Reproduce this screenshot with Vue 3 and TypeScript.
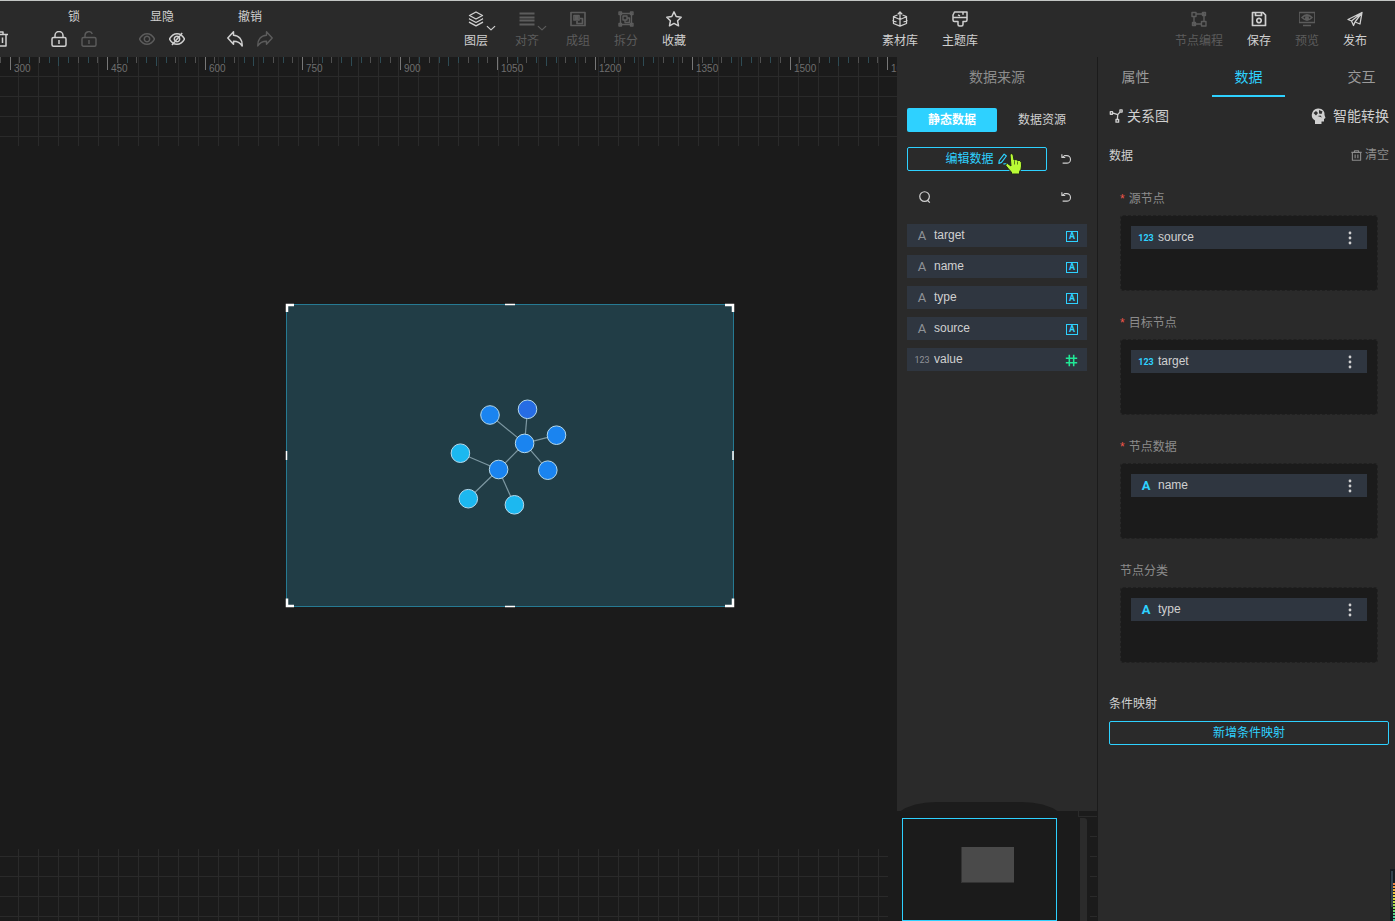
<script setup lang="ts">
import { h, type FunctionalComponent } from 'vue'

interface Glyph {
  d: string
  width: number
}

const glyphs: Record<string, Glyph> = {
  trash: { d: 'M0 3.5H16M5 3V1H11V3M2 3.5V15H14V3.5M6 6.5V12M10.5 6.5V12', width: 1.5 },
  bin: { d: 'M.5 3.5H15.5M5 3V1H11V3M2 3.5V15H14V3.5M6 6.5V12M10 6.5V12', width: 1.6 },
  lock: { d: 'M2.5 6.5H13.5Q15 6.5 15 8V13.7Q15 15.2 13.5 15.2H2.5Q1 15.2 1 13.7V8Q1 6.5 2.5 6.5ZM4 6.5V4.5A4 4 0 0 1 12 4.5V6.5M8 9V13', width: 1.5 },
  unlock: { d: 'M2.5 6.5H13.5Q15 6.5 15 8V13.7Q15 15.2 13.5 15.2H2.5Q1 15.2 1 13.7V8Q1 6.5 2.5 6.5ZM4 6.5V4.5A3.8 3.8 0 0 1 11.3 3M8 9V13', width: 1.4 },
  eye: { d: 'M.5 8Q3.5 2.8 8 2.8T15.5 8Q12.5 13.2 8 13.2T.5 8ZM10.7 8A2.7 2.7 0 1 1 5.3 8A2.7 2.7 0 1 1 10.7 8Z', width: 1.5 },
  eyeOff: { d: 'M.5 8Q3.5 2.8 8 2.8T15.5 8Q12.5 13.2 8 13.2T.5 8ZM10.7 8A2.7 2.7 0 1 1 5.3 8A2.7 2.7 0 1 1 10.7 8ZM13.2 2L3 14', width: 1.5 },
  undo: { d: 'M.8 7L6.5 .8V4.3C12 4.5 15.5 8.5 15.2 15C13 11.5 10.5 10.3 6.5 10.3V13.2Z', width: 1.5 },
  redo: { d: 'M15.2 7L9.5 .8V4.3C4 4.5 .5 8.5 .8 15C3 11.5 5.5 10.3 9.5 10.3V13.2Z', width: 1.4 },
  layers: { d: 'M8 1L14.5 4.5L8 8L1.5 4.5ZM2 7.5L1.5 8L8 11.5L14.5 8L14 7.5M2 11L1.5 11.3L8 14.8L14.5 11.3L14 11', width: 1.4 },
  align: { d: 'M.5 2.5H15.5M.5 6.5H15.5M.5 9.5H15.5M.5 13.5H15.5', width: 2 },
  group: { d: 'M1 1.5H15V14.5H1ZM4 4.5H9V9H4ZM5 6H8M5 7.5H8M7 10V12.5H12.5V7.5H10', width: 1.7 },
  split: { d: 'M2.5 2.5H13.5V13.5H2.5ZM1 1H3.5V3.5H1ZM12.5 1H15V3.5H12.5ZM1 12.5H3.5V15H1ZM12.5 12.5H15V15H12.5ZM5 5H9V9H5ZM7 9V11.5H11.5V7H9', width: 1.4 },
  star: { d: 'M8 .9L10.2 5.5L15.2 6.2L11.6 9.8L12.5 14.8L8 12.4L3.5 14.8L4.4 9.8L.8 6.2L5.8 5.5Z', width: 1.5 },
  box: { d: 'M5.5 4L1.5 5.5V12.5L8 15.2L14.5 12.5V5.5L10.5 4M1 5.5L8 8.5L15 5.5M8 15V1M5.8 3.2L8 1L10.2 3.2M.5 9.5L4.5 11M15.5 9.5L11.5 11', width: 1.3 },
  brush: { d: 'M2.5 1H15V9Q15 10.5 13.5 10.5H11V13.5Q11 15 9.5 15H7.5Q6 15 6 13.5V10.5H2.5Q1 10.5 1 9V4ZM1 6.5H15M6 3.8L8 4.8M11 1V3.8', width: 1.5 },
  flow: { d: 'M1 1.5H5V5.5H1ZM10.5 10.5H15V15H10.5ZM5.5 3H13V10.5M3 6V13H10M11.5 1.5H14.5V4.5H11.5ZM1.5 11.5H4.5V14.5H1.5Z', width: 1.4 },
  save: { d: 'M1.5 1.5H12L14.5 4V14.5H1.5ZM4.5 1.5V4.5H10.5V1.5M10.2 9.5A2.2 2.2 0 1 1 5.8 9.5A2.2 2.2 0 1 1 10.2 9.5Z', width: 1.7 },
  preview: { d: 'M0 1.5H16V11.5H0ZM4 14.5H12M3 6.5Q8 1.5 13 6.5Q8 11.5 3 6.5ZM7 6H9V7.5H7Z', width: 1.7 },
  send: { d: 'M15 1.5L1 8.5L4.5 10L15 1.5L13 13L8 11L6.5 14.5L4.5 10M8 11L15 1.5', width: 1.3 },
  reload: { d: 'M2.5 1.5V6H7M3.500 5.5L6 3.5H9A5 5 0 0 1 9 13.500H3.5', width: 1.5 },
  search: { d: 'M13 7.5A5.5 5.5 0 1 1 2 7.5A5.5 5.5 0 1 1 13 7.5ZM11 12L13.5 14.5', width: 1.4 },
  edit: { d: 'M3 10L9.5 1.5L12.5 4L6 12.5L2.5 14ZM8.5 14.5H14.5', width: 1.6 },
  relation: { d: 'M4 4.5L10 6.5L13 3M10 6.5L9.5 12M1.5 3H4V6H1.5ZM12.5 1H15V3.5H12.5ZM8 12H11V15H8Z', width: 1.5 },
  hash: { d: 'M5.3 1V15M10.7 1V15M1 5.2H15M1 10.8H15', width: 1.9 },
  caret: { d: 'M1.5 5L8 11L14.5 5', width: 2 },
}

const Icon: FunctionalComponent<{ name: string; size?: number }> = (props) => {
  const glyph = glyphs[props.name]
  const size = props.size ?? 16
  return h('svg', { width: size, height: size, viewBox: '0 0 16 16', 'aria-hidden': 'true' }, [
    h('path', {
      d: glyph.d,
      fill: 'none',
      stroke: 'currentColor',
      'stroke-width': glyph.width,
      'stroke-linejoin': 'round',
    }),
  ])
}
Icon.props = ['name', 'size']

interface Tool {
  icon: string
  label: string
  off?: boolean
  menu?: boolean
  wide?: boolean
}

const toolPairs: { label: string; tools: Tool[] }[] = [
  { label: '锁', tools: [{ icon: 'lock', label: '锁定' }, { icon: 'unlock', label: '解锁', off: true }] },
  { label: '显隐', tools: [{ icon: 'eye', label: '显示', off: true }, { icon: 'eyeOff', label: '隐藏' }] },
  { label: '撤销', tools: [{ icon: 'undo', label: '撤销' }, { icon: 'redo', label: '重做', off: true }] },
]

const toolSets: { key: string; tools: Tool[] }[] = [
  {
    key: 'arrange',
    tools: [
      { icon: 'layers', label: '图层', menu: true },
      { icon: 'align', label: '对齐', off: true, menu: true },
      { icon: 'group', label: '成组', off: true },
      { icon: 'split', label: '拆分', off: true },
      { icon: 'star', label: '收藏' },
    ],
  },
  {
    key: 'library',
    tools: [
      { icon: 'box', label: '素材库', wide: true },
      { icon: 'brush', label: '主题库', wide: true },
    ],
  },
  {
    key: 'publish',
    tools: [
      { icon: 'flow', label: '节点编程', off: true, wide: true },
      { icon: 'save', label: '保存' },
      { icon: 'preview', label: '预览', off: true },
      { icon: 'send', label: '发布' },
    ],
  },
]

const ticks = Array.from({ length: 92 }, (_, i) => {
  const step = i - 1
  const major = step % 10 === 0
  const middle = step % 10 === 5
  return {
    x: Math.floor(10 + step * 9.75),
    length: major ? 13 : middle ? 9 : 6,
    kind: major ? 'major' : middle || step % 2 === 0 ? 'cool' : 'minor',
    label: major ? String(300 + step * 15) : '',
  }
})

const nodes = [
  { x: 205, y: 112, color: '#1a84f0' },
  { x: 242.5, y: 106.3, color: '#266ce4' },
  { x: 239.6, y: 140.4, color: '#1a84f0' },
  { x: 271.5, y: 132.2, color: '#1a84f0' },
  { x: 262.8, y: 167.2, color: '#1a84f0' },
  { x: 213.6, y: 166.5, color: '#1a84f0' },
  { x: 175.4, y: 150.2, color: '#1cb8f0' },
  { x: 183.3, y: 195.7, color: '#1cb8f0' },
  { x: 229.4, y: 201.8, color: '#1cb8f0' },
]
const edges = [[0, 2], [1, 2], [3, 2], [4, 2], [5, 2], [6, 5], [7, 5], [8, 5]]

const columns = [
  { name: 'target', numeric: false },
  { name: 'name', numeric: false },
  { name: 'type', numeric: false },
  { name: 'source', numeric: false },
  { name: 'value', numeric: true },
]

const fields = [
  { label: '源节点', required: true, value: 'source', numeric: true },
  { label: '目标节点', required: true, value: 'target', numeric: true },
  { label: '节点数据', required: true, value: 'name', numeric: false },
  { label: '节点分类', required: false, value: 'type', numeric: false },
]

const tabs = ['属性', '数据', '交互']
const meter = ['#f08040', '#f09a3c', '#efb13c', '#edc43c', '#e4d23e', '#d3da40', '#bcdc46', '#a3dc50', '#86da5e', '#6ad872', '#54d688', '#48d49c', '#42d2ac']
</script>

<template>
  <div class="editor">
    <header class="toolbar">
      <div class="set pairs">
        <button class="tool-icon first" type="button" aria-label="删除"><Icon name="trash" /></button>
        <div v-for="pair in toolPairs" :key="pair.label" class="pair">
          <span class="pair-label">{{ pair.label }}</span>
          <div class="pair-tools">
            <button v-for="tool in pair.tools" :key="tool.icon" class="tool-icon" :class="{ off: tool.off }" type="button" :aria-label="tool.label">
              <Icon :name="tool.icon" />
            </button>
          </div>
        </div>
      </div>
      <div v-for="set in toolSets" :key="set.key" class="set" :class="set.key">
        <button v-for="tool in set.tools" :key="tool.label" class="tool" :class="{ off: tool.off, wide: tool.wide, menu: tool.menu }" type="button">
          <Icon :name="tool.icon" />
          <span>{{ tool.label }}</span>
          <Icon v-if="tool.menu" class="caret" name="caret" :size="10" />
        </button>
      </div>
    </header>

    <div class="workspace">
      <main class="canvas">
        <div class="grid grid-top">
          <svg class="ruler" width="100%" height="20" aria-hidden="true">
            <g v-for="tick in ticks" :key="tick.x">
              <rect :class="tick.kind" :x="tick.x" y="0" width="1" :height="tick.length" />
              <text v-if="tick.label" :x="tick.x + 4" y="15">{{ tick.label }}</text>
            </g>
          </svg>
        </div>
        <svg class="chart" width="450" height="305" viewBox="0 0 450 305" role="img" aria-label="关系图">
          <rect x="1.5" y="1.5" width="447" height="302" fill="#213d46" stroke="#267a93" />
          <g stroke="#7d98a2" stroke-width="1.2">
            <line v-for="edge in edges" :key="edge.join()" :x1="nodes[edge[0]].x" :y1="nodes[edge[0]].y" :x2="nodes[edge[1]].x" :y2="nodes[edge[1]].y" />
          </g>
          <circle v-for="(node, i) in nodes" :key="i" :cx="node.x" :cy="node.y" r="9.3" :fill="node.color" stroke="#b5d9ec" />
          <g fill="none" stroke="#fff" stroke-width="2.5">
            <path d="M2 9V2H9M440 2H448V9M2 295.5V303H9M440 303H448V295.5" />
            <path stroke-width="1.5" d="M220 1.5H230M220 303.5H230M1.5 148V157M448 148V157" />
          </g>
        </svg>
        <div class="grid grid-bottom"></div>
      </main>

      <aside class="side">
        <section class="source">
          <h2>数据来源</h2>
          <div class="switch">
            <button class="active" type="button">静态数据</button>
            <button type="button">数据资源</button>
          </div>
          <div class="edit-row">
            <button class="outline" type="button">编辑数据<Icon name="edit" :size="12" /></button>
            <button class="plain" type="button" aria-label="刷新数据"><Icon name="reload" :size="12" /></button>
            <svg class="pointer" width="18" height="22" viewBox="0 0 18 22" aria-hidden="true">
              <path d="M5 1.5Q6.5 -.2 8 1.5L9 7L11 6.5L13 7.5L15 7.5Q17 9 16.5 13Q16.5 17 14.5 18.5V21H6.5V19Q4 17 .8 12.5Q.5 10.5 2.5 10.5L6 13Z" fill="#b9fb35" stroke="#1f2a18" />
              <path d="M9.5 7.5V11.5M12.5 8.5V11.5" stroke="#5b7d1d" />
            </svg>
          </div>
          <div class="search-row">
            <label for="column-search" aria-label="搜索字段"><Icon name="search" :size="14" /></label>
            <input id="column-search" type="text" />
            <button class="plain" type="button" aria-label="重置搜索"><Icon name="reload" :size="12" /></button>
          </div>
          <ul class="columns">
            <li v-for="column in columns" :key="column.name" class="chip">
              <span class="kind" :class="{ digits: column.numeric }">{{ column.numeric ? '123' : 'A' }}</span>
              <span class="name">{{ column.name }}</span>
              <Icon v-if="column.numeric" class="hash" name="hash" :size="13" />
              <span v-else class="boxed">A</span>
            </li>
          </ul>
        </section>
        <div class="navigator">
          <svg class="bump" width="160" height="10" viewBox="0 0 160 10" aria-hidden="true">
            <path d="M0 10Q14 0 37 0H123Q146 0 160 10Z" fill="#1c1c1c" />
          </svg>
          <div class="minimap"><div class="thumb"></div></div>
          <div class="track"></div>
          <div class="corner"></div>
          <div class="remnant"></div>
        </div>
      </aside>

      <aside class="settings">
        <nav class="tabs">
          <button v-for="tab in tabs" :key="tab" type="button" :class="{ active: tab === '数据' }">{{ tab }}</button>
        </nav>
        <div class="kind-row">
          <span class="chart-kind"><Icon name="relation" :size="14" />关系图</span>
          <button type="button" class="smart">
            <svg width="15" height="17" viewBox="0 0 15 17" aria-hidden="true">
              <path d="M7 .5C11.5 .3 14 3.5 13.5 7L14.5 10L13 11V13.5H10.5V16H4V12.5C1.5 11 .5 9 .8 6.5C1.2 3 3.5 .8 7 .5Z" fill="#d0d0d0" />
              <path d="M2.5 5L5 3L7 5L5 7.5ZM8 2L11.5 3.5L10.5 6L8 5.5ZM6.5 8L9.5 7.5L11 9.5" fill="#333" />
            </svg>
            智能转换
          </button>
        </div>
        <div class="data-row">
          <h3>数据</h3>
          <button type="button"><Icon name="bin" :size="11" />清空</button>
        </div>
        <div class="fields">
          <section v-for="field in fields" :key="field.label">
            <h4><i v-if="field.required">*</i>{{ field.label }}</h4>
            <div class="drop">
              <div class="chip">
                <span class="kind bound" :class="{ digits: field.numeric }">{{ field.numeric ? '123' : 'A' }}</span>
                <span class="name">{{ field.value }}</span>
                <button class="more" type="button" :aria-label="field.label + '选项'">
                  <svg width="4" height="14" viewBox="0 0 4 14" aria-hidden="true">
                    <circle v-for="y in [2, 7, 12]" :key="y" cx="2" :cy="y" r="1.4" fill="currentColor" />
                  </svg>
                </button>
              </div>
            </div>
          </section>
        </div>
        <section class="mapping">
          <h3>条件映射</h3>
          <button class="outline" type="button">新增条件映射</button>
        </section>
        <svg class="meter" width="5" height="52" viewBox="0 0 5 52" aria-hidden="true">
          <rect width="5" height="52" fill="#151b20" />
          <rect x="1" y="2" width="2" height="36" fill="#33424d" />
          <rect v-for="(color, i) in meter" :key="color" x="3" :y="14 + i * 3" width="2" height="2" :fill="color" />
        </svg>
      </aside>
    </div>
  </div>
</template>

<style>
body {
  margin: 0;
  background: #1b1b1b;
}
</style>

<style scoped>
.editor {
  display: flex;
  flex-direction: column;
  height: 100vh;
  overflow: hidden;
  color: #d0d0d0;
  background: #1b1b1b;
  font: 12px/16px "Liberation Sans", "Noto Sans CJK SC", sans-serif;
}
.editor * {
  box-sizing: border-box;
}
svg {
  display: block;
  flex: none;
}
button {
  margin: 0;
  padding: 0;
  border: 0;
  color: inherit;
  background: none;
  font: inherit;
  white-space: nowrap;
}
h2,
h3,
h4,
ul {
  margin: 0;
  padding: 0;
  font-size: 12px;
  font-weight: 400;
}

.toolbar {
  display: flex;
  flex: none;
  justify-content: space-between;
  height: 57px;
  padding-right: 16px;
  overflow: hidden;
  border-top: 1px solid #c3c6c4;
  background: #2a2a2a;
}
.set {
  display: flex;
  align-items: flex-start;
}
.pairs {
  gap: 28px;
  margin-left: -8px;
}
.first {
  width: 16px;
  margin: 27px 8px 0 0;
}
.pair {
  width: 60px;
  padding-top: 8px;
  text-align: center;
}
.pair-label {
  display: block;
}
.pair-tools {
  display: flex;
  margin-top: 3px;
}
.tool-icon {
  display: flex;
  align-items: center;
  justify-content: center;
  height: 22px;
}
.pair-tools .tool-icon {
  width: 30px;
}
.tool {
  position: relative;
  display: flex;
  flex-direction: column;
  align-items: center;
  gap: 6px;
  width: 48px;
  padding-top: 10px;
}
.tool.menu {
  margin-right: 3px;
}
.tool.wide {
  width: 60px;
}
.publish {
  padding-left: 7px;
}
.publish .wide {
  margin-right: 6px;
}
.off {
  color: #5c5c5c;
}
.caret {
  position: absolute;
  top: 22px;
  right: 4px;
}

.workspace {
  display: flex;
  flex: 1;
  min-height: 0;
}
.canvas {
  position: relative;
  display: flex;
  flex: 1;
  flex-direction: column;
  justify-content: space-between;
  min-width: 0;
}
.grid {
  background-image:
    linear-gradient(90deg, #2a2a2a 1px, transparent 1px),
    linear-gradient(#2a2a2a 1px, transparent 1px);
  background-size: 20px 20px;
}
.grid-top {
  height: 89px;
  background-position: 18px 19px;
}
.grid-bottom {
  height: 72px;
  margin-right: 9px;
  background-position: 18px 7px;
}
.ruler {
  overflow: hidden;
  font-size: 10px;
}
.ruler text {
  fill: #6e6e6e;
}
.major {
  fill: #777;
}
.minor {
  fill: #505050;
}
.cool {
  fill: #2e4b54;
}
.chart {
  position: absolute;
  top: 246px;
  left: 285px;
}

.side {
  display: flex;
  flex: none;
  flex-direction: column;
  width: 201px;
  padding-right: 1px;
}
.source {
  flex: 1;
  padding: 8px 10px 0;
  background: #2a2a2a;
}
.source h2 {
  color: #8c8c8c;
  font-size: 14px;
  line-height: 24px;
  text-align: center;
}
.switch {
  display: grid;
  grid-template-columns: 1fr 1fr;
  margin-top: 19px;
}
.switch button {
  height: 24px;
  border-radius: 2px;
}
.switch .active {
  color: #fff;
  background: #2ed1ff;
  font-weight: 700;
}
.edit-row {
  position: relative;
  display: flex;
  gap: 10px;
  margin-top: 15px;
}
.outline {
  display: flex;
  flex: 1;
  align-items: center;
  justify-content: center;
  gap: 3px;
  height: 24px;
  border: 1px solid #2ed1ff;
  border-radius: 2px;
  color: #2ed1ff;
}
.plain {
  display: flex;
  align-items: center;
  justify-content: center;
  width: 18px;
  height: 24px;
  margin-right: 12px;
}
.pointer {
  position: absolute;
  top: 6px;
  left: 98px;
}
.search-row {
  display: flex;
  align-items: center;
  height: 24px;
  margin: 14px 0 15px;
  padding-left: 11px;
}
.search-row input {
  flex: 1;
  min-width: 0;
  padding: 0 8px;
  border: 0;
  outline: 0;
  color: inherit;
  background: none;
  font: inherit;
}
.columns {
  display: grid;
  gap: 8px;
  list-style: none;
}
.chip {
  display: flex;
  align-items: center;
  height: 23px;
  padding: 0 8px;
  background: #2f3640;
}
.columns .chip {
  padding-right: 9px;
}
.kind {
  display: flex;
  flex: none;
  justify-content: center;
  width: 14px;
  margin-right: 5px;
  color: #8f9398;
  font: 13px/16px Roboto, sans-serif;
}
.kind.digits {
  font-size: 9px;
}
.kind.bound {
  color: #2ed1ff;
  font-weight: 700;
}
.name {
  flex: 1;
  padding-bottom: 2px;
}
.boxed {
  width: 12px;
  height: 11px;
  margin-top: 2px;
  border: 1px solid #2ed1ff;
  color: #2ed1ff;
  font: 700 9px/9px Roboto, sans-serif;
  text-align: center;
}
.hash {
  margin-top: 2px;
  color: #20e896;
}

.navigator {
  position: relative;
  display: flex;
  flex: none;
  height: 110px;
  padding: 7px 10px 0 5px;
}
.bump {
  position: absolute;
  top: -9px;
  left: 2px;
}
.minimap {
  flex: 1;
  padding: 28px 0 0 58px;
  margin-right: 23px;
  border: 1px solid #2ed1ff;
}
.thumb {
  width: 53px;
  height: 36px;
  border-bottom: 1px solid #333;
  border-left: 1px solid #333;
  background: #4a4a4a;
}
.track {
  width: 7px;
  border-top-right-radius: 3px;
  background: #2b2b2b;
}
.corner {
  position: absolute;
  top: 0;
  right: 0;
  width: 19px;
  height: 6px;
  border-bottom: 1px solid #2a2a2a;
  border-left: 1px solid #2a2a2a;
}
.remnant {
  position: absolute;
  top: 5px;
  right: 0;
  bottom: 0;
  width: 7px;
  background: repeating-linear-gradient(#2a2a2a 0 1px, transparent 1px 20px);
}

.settings {
  position: relative;
  flex: none;
  width: 297px;
  background: #2a2a2a;
}
.tabs {
  display: flex;
  gap: 40px;
  height: 40px;
  padding-left: 1px;
  overflow: hidden;
}
.tabs button {
  flex: none;
  width: 73px;
  padding-top: 2px;
  border-bottom: 2px solid transparent;
  color: #9a9a9a;
  font-size: 14px;
}
.tabs .active {
  border-color: #2ed1ff;
  color: #2ed1ff;
}
.kind-row,
.data-row {
  display: flex;
  align-items: center;
  justify-content: space-between;
  padding: 0 6px 0 11px;
}
.kind-row {
  height: 38px;
  font-size: 14px;
}
.chart-kind,
.smart,
.data-row button {
  display: flex;
  align-items: center;
}
.chart-kind {
  gap: 4px;
}
.smart {
  gap: 7px;
}
.data-row {
  height: 40px;
}
.data-row h3 {
  padding-top: 2px;
}
.data-row button {
  gap: 3px;
  color: #8c8c8c;
}
.fields {
  display: grid;
  gap: 20px;
  padding: 12px 17px 0 22px;
}
h4 {
  color: #8c8c8c;
  line-height: 24px;
}
h4 i {
  margin-right: 4px;
  color: #f0564a;
  font-style: normal;
}
.drop {
  height: 76px;
  margin-top: 4px;
  padding: 10px;
  border: 1px dashed #202020;
  border-radius: 3px;
  background: #1b1b1b;
  background-clip: padding-box;
}
.more {
  display: flex;
  justify-content: center;
  width: 18px;
}
.mapping {
  padding: 29px 6px 0 11px;
}
.mapping h3 {
  margin-bottom: 5px;
  line-height: 24px;
}
.mapping .outline {
  width: 100%;
}
.meter {
  position: absolute;
  right: 0;
  bottom: 0;
}
</style>
